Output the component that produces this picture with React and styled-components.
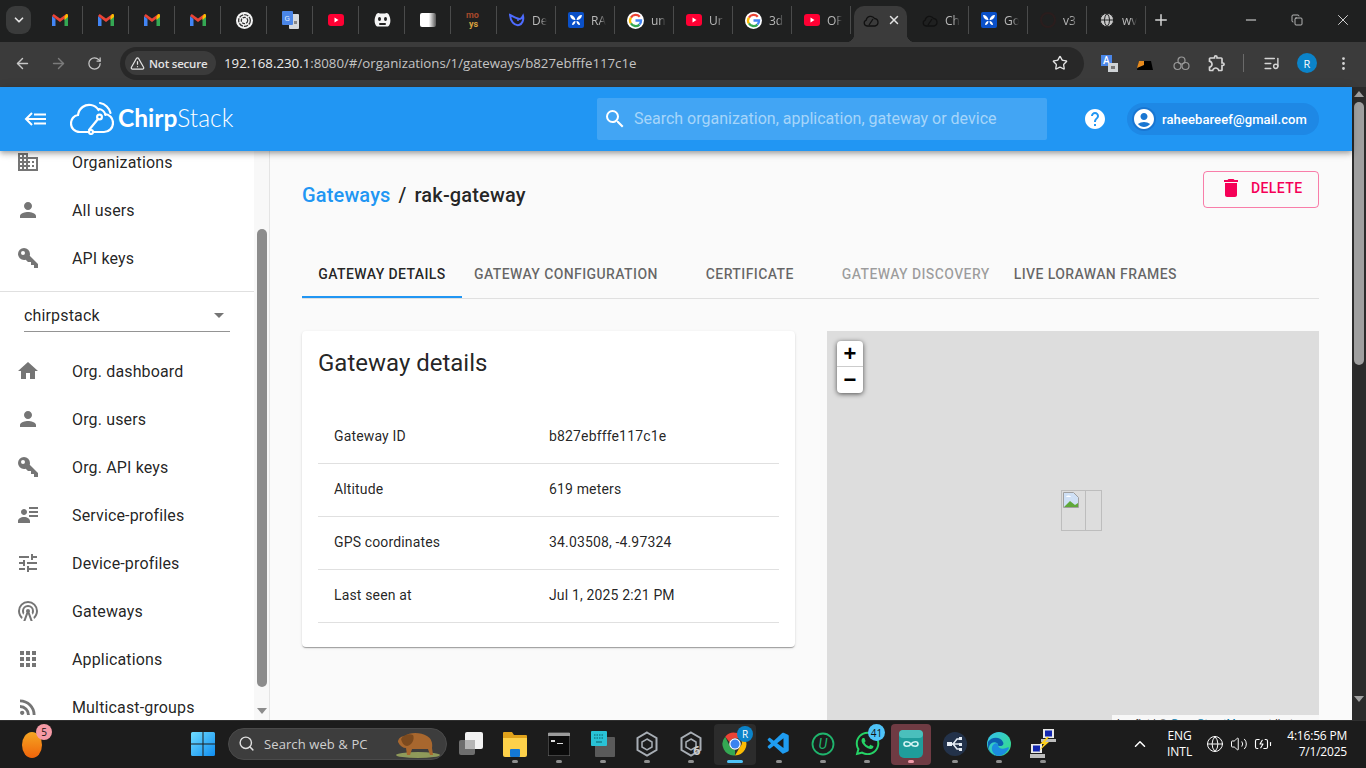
import * as React from 'react';
import styled, { createGlobalStyle } from 'styled-components';
import {
  ArrowLeft, ArrowRight, RotateCw, Star, X, Minus, Plus, Copy, ChevronDown, ChevronUp,
  EllipsisVertical, TriangleAlert, ListMusic, Search, Volume2, Globe, BatteryCharging,
} from 'lucide-react';
import { MdDelete, MdHelp, MdAccountCircle, MdSearch, MdHome, MdPerson, MdDomain, MdTune, MdApps, MdOutlineExtension } from 'react-icons/md';
import { FaWhatsapp } from 'react-icons/fa';
import { VscVscode } from 'react-icons/vsc';

const Global = createGlobalStyle`
  html, body { margin: 0; padding: 0; height: 100%; overflow: hidden; }
  body { font-family: Roboto, "Liberation Sans", sans-serif; background: #1c1c1c; }
  * { box-sizing: border-box; }
`;

const Screen = styled.div`
  width: 1366px;
  height: 768px;
  display: flex;
  flex-flow: column;
  overflow: hidden;
`;

/* ---- browser chrome ---- */

const TabStrip = styled.div`
  flex: 0 0 42px;
  display: flex;
  align-items: flex-start;
  background: #1f2020;
  padding: 6px 0 0 6px;
  font-family: "Open Sans", sans-serif;
`;

const TabMenu = styled.div`
  flex: 0 0 25px;
  height: 28px;
  margin-right: 6px;
  border-radius: 9px;
  background: #3a3b3b;
  color: #e3e3e3;
  display: flex;
  align-items: center;
  justify-content: center;
`;

const Tab = styled.div`
  flex: 0 0 ${p => p.$width}px;
  height: 28px;
  display: flex;
  align-items: center;
  padding-left: ${p => p.$wide ? 12 : 15}px;
  gap: 7px;
  border-right: 1px solid #4a4b4b;
`;

const ActiveTab = styled.div`
  flex: 0 0 53px;
  height: 36px;
  margin: 0 3px;
  border-radius: 10px 10px 0 0;
  background: #3b3b3b;
  display: flex;
  align-items: center;
  gap: 8px;
  padding: 0 0 8px 9px;
  color: #e3e3e3;
  position: relative;

  &::before, &::after {
    content: '';
    position: absolute;
    bottom: 0;
    width: 8px;
    height: 8px;
  }
  &::before {
    left: -8px;
    background: radial-gradient(circle at 0 0, transparent 8px, #3b3b3b 8.500px);
  }
  &::after {
    right: -8px;
    background: radial-gradient(circle at 100% 0, transparent 8px, #3b3b3b 8.500px);
  }
`;

const TabTitle = styled.span`
  width: 15px;
  overflow: hidden;
  font-size: 12px;
  color: #b9b9b9;
  white-space: nowrap;
  mask-image: linear-gradient(90deg, #000 55%, transparent);
`;

const NewTab = styled.div`
  flex: 0 0 30px;
  height: 28px;
  color: #d5d5d5;
  display: flex;
  align-items: center;
  justify-content: center;
`;

const WindowButtons = styled.div`
  margin-left: auto;
  display: flex;
  color: #e3e3e3;
  margin-top: -6px;
`;

const WindowButton = styled.div`
  width: 46px;
  height: 40px;
  display: flex;
  align-items: center;
  justify-content: center;
`;

const Toolbar = styled.div`
  flex: 0 0 45px;
  display: flex;
  align-items: center;
  background: #3b3b3b;
  padding: 0 0 3px 4px;
  color: #c7c7c7;
  font-family: "Open Sans", sans-serif;
`;

const NavButton = styled.div`
  flex: 0 0 36px;
  display: flex;
  justify-content: center;
  color: ${p => p.$off ? '#7b7b7b' : '#c7c7c7'};
`;

const Omnibox = styled.div`
  flex: 0 0 964px;
  height: 33px;
  margin: 0 7px 0 8px;
  border-radius: 17px;
  background: #282828;
  display: flex;
  align-items: center;
  padding: 0 16px 0 5px;
`;

const SecureChip = styled.div`
  height: 24px;
  width: 91px;
  border-radius: 12px;
  background: #3b3b3b;
  display: flex;
  align-items: center;
  gap: 4px;
  padding-left: 5px;
  color: #e3e3e3;
  font-size: 11.5px;
  font-weight: 600;
  white-space: nowrap;
  letter-spacing: -0.2px;
`;

const Url = styled.div`
  margin-left: 8px;
  font-size: 13.25px;
  color: #c4c4c4;
  flex: 1;
  white-space: nowrap;
  span { color: #ececec; }
`;

const ToolIcon = styled.div`
  flex: 0 0 36px;
  display: flex;
  justify-content: center;
  align-items: center;
`;

const ToolDivider = styled.div`
  width: 1px;
  height: 18px;
  background: #6a6a6a;
  margin: 0 9px 0 8px;
`;

const ProfileDot = styled.div`
  width: 20px;
  height: 20px;
  border-radius: 50%;
  background: #0b83c9;
  color: #fff;
  font-size: 11px;
  display: flex;
  align-items: center;
  justify-content: center;
`;

/* ---- chirpstack ---- */

const AppFrame = styled.div`
  flex: 1;
  min-height: 0;
  display: flex;
`;

const AppColumn = styled.div`
  flex: 1;
  min-width: 0;
  display: flex;
  flex-flow: column;
`;

const Header = styled.header`
  flex: 0 0 64px;
  background: #2196f3;
  display: flex;
  align-items: center;
  color: #fff;
  padding: 0 33px 0 24px;
  position: relative;
  z-index: 2;
  box-shadow: 0 2px 4px -1px rgba(0,0,0,.2), 0 4px 5px 0 rgba(0,0,0,.14), 0 1px 10px 0 rgba(0,0,0,.12);
`;

const Logo = styled.div`
  display: flex;
  align-items: center;
  margin-left: 24px;
  padding-bottom: 4px;
  flex: 0 0 527px;
  gap: 4px;
`;

const LogoText = styled.div`
  font-family: Lato, Roboto, sans-serif;
  font-size: 24.5px;
  font-weight: 300;
  b { font-weight: 700; }
`;

const SearchBox = styled.div`
  flex: 0 0 450px;
  height: 42px;
  background: rgba(255,255,255,.15);
  border-radius: 2px;
  display: flex;
  align-items: center;
  padding: 0 0 1px 6px;
  gap: 7px;
  font-size: 16px;
  color: #a6d5fa;
`;

const HelpButton = styled.div`
  margin-left: 36px;
  display: flex;
`;

const UserChip = styled.div`
  margin-left: auto;
  height: 32px;
  width: 192px;
  border-radius: 16px;
  background: #1e88e5;
  display: flex;
  align-items: center;
  padding-left: 5px;
  gap: 6px;
  font-size: 13px;
  font-weight: 500;
  letter-spacing: .1px;
  white-space: nowrap;
`;

const Avatar = styled.div`
  width: 24px;
  height: 24px;
  border-radius: 50%;
  background: #1976d2;
  display: flex;
  align-items: center;
  justify-content: center;
`;

const Body = styled.div`
  flex: 1;
  min-height: 0;
  display: flex;
`;

const Sidebar = styled.aside`
  flex: 0 0 270px;
  display: flex;
  background: #fff;
  border-right: 1px solid #e4e4e4;
  overflow: hidden;
`;

const SideContent = styled.nav`
  flex: 0 0 254px;
  margin-top: -13px;
`;

const NavItem = styled.div`
  height: 48px;
  display: flex;
  align-items: center;
  padding-left: 16px;
  gap: 32px;
  font-size: 16px;
  letter-spacing: .15px;
  color: rgba(0,0,0,.87);
  svg { color: #757575; flex: 0 0 24px; }
`;

const Divider = styled.div`
  height: 1px;
  background: #e0e0e0;
  margin: 9px 0 7px;
`;

const OrgSelect = styled.div`
  height: 33px;
  margin: 0 24px 15px;
  border-bottom: 1px solid #949494;
  display: flex;
  align-items: center;
  justify-content: space-between;
  font-size: 16px;
  letter-spacing: .15px;
  color: rgba(0,0,0,.87);
`;

const Caret = styled.div`
  width: 0;
  height: 0;
  margin-right: 6px;
  border: 5px solid transparent;
  border-top-color: #757575;
  border-bottom: 0;
`;

const SideScroll = styled.div`
  flex: 0 0 15px;
  background: #f8f8f8;
  display: flex;
  flex-flow: column;
  align-items: center;
  padding-top: 78px;
`;

const SideThumb = styled.div`
  width: 10px;
  height: 458px;
  border-radius: 5px;
  background: #8c8c8c;
`;

const SideArrow = styled.div`
  margin-top: 21px;
  width: 0;
  height: 0;
  border: 5px solid transparent;
  border-top: 6px solid #8c8c8c;
  border-bottom: 0;
`;

const Main = styled.main`
  flex: 1;
  min-width: 0;
  background: #fafafa;
  padding: 20px 33px 0 32px;
  overflow: hidden;
`;

const TitleRow = styled.div`
  display: flex;
  justify-content: space-between;
  align-items: flex-start;
  height: 79px;
`;

const Crumbs = styled.h1`
  margin: 14px 0 0;
  font-size: 20px;
  font-weight: 500;
  line-height: 20px;
  letter-spacing: .15px;
  color: rgba(0,0,0,.87);
  display: flex;
  gap: 8px;
`;

const CrumbLink = styled.span`
  color: #2196f3;
`;

const DeleteButton = styled.button`
  width: 116px;
  height: 37px;
  background: none;
  border: 1px solid rgba(245,0,87,.5);
  border-radius: 4px;
  color: #f50057;
  font: 500 14px Roboto, sans-serif;
  letter-spacing: .4px;
  display: flex;
  align-items: center;
  padding: 0 0 3px 15px;
  gap: 8px;
`;

const TabBar = styled.div`
  height: 49px;
  display: flex;
  border-bottom: 1px solid #e0e0e0;
`;

const PageTab = styled.div`
  min-width: 160px;
  height: 48px;
  padding: 2px 12px 0;
  display: flex;
  align-items: center;
  justify-content: center;
  font-size: 14px;
  font-weight: 500;
  letter-spacing: .4px;
  white-space: nowrap;
  color: ${p => p.$active ? 'rgba(0,0,0,.87)' : p.$disabled ? 'rgba(0,0,0,.38)' : 'rgba(0,0,0,.6)'};
  border-bottom: 2px solid ${p => p.$active ? '#2196f3' : 'transparent'};
`;

const Columns = styled.div`
  margin-top: 32px;
  display: grid;
  grid-template-columns: 493px 492px;
  gap: 32px;
  align-items: start;
`;

const Card = styled.section`
  height: 316px;
  padding: 16px;
  background: #fff;
  border-radius: 4px;
  box-shadow: 0 2px 1px -1px rgba(0,0,0,.2), 0 1px 1px 0 rgba(0,0,0,.14), 0 1px 3px 0 rgba(0,0,0,.12);
`;

const CardTitle = styled.h2`
  margin: 0 0 32px;
  font-size: 24px;
  line-height: 32px;
  font-weight: 400;
  color: rgba(0,0,0,.87);
`;

const DetailRow = styled.div`
  height: 53px;
  display: flex;
  align-items: center;
  padding: 0 0 2px 16px;
  border-bottom: 1px solid #e0e0e0;
  font-size: 14px;
  letter-spacing: .15px;
  color: rgba(0,0,0,.87);
`;

const DetailLabel = styled.div`
  flex: 0 0 215px;
`;

const MapPane = styled.div`
  height: 520px;
  background: #ddd;
  position: relative;
  padding: 10px;
`;

const ZoomControl = styled.div`
  width: 26px;
  border-radius: 4px;
  background: #fff;
  box-shadow: 0 1px 5px rgba(0,0,0,.65);
`;

const ZoomButton = styled.div`
  height: 26px;
  display: flex;
  align-items: center;
  justify-content: center;
  color: #000;
  font: 700 22px "Liberation Sans", sans-serif;
  border-bottom: ${p => p.$top ? '1px solid #ccc' : 0};
`;

const BrokenTile = styled.div`
  position: absolute;
  top: 159px;
  left: ${p => p.$left}px;
  width: ${p => p.$width}px;
  height: 41px;
  border: 1px solid #bdbdbd;
  padding: 1px;
`;

const Attribution = styled.div`
  position: absolute;
  top: 384px;
  right: 0;
  width: 207px;
  height: 20px;
  padding: 2px 5px 0;
  background: rgba(255,255,255,.75);
  color: #333;
  font: 11px "Liberation Sans", sans-serif;
  white-space: nowrap;
  overflow: hidden;
  b { color: #0078a8; font-weight: 400; }
`;

const PageScroll = styled.div`
  flex: 0 0 14px;
  background: #2b2b2b;
  display: flex;
  flex-flow: column;
  align-items: center;
  padding-top: 4px;
`;

const ScrollUp = styled.div`
  width: 0;
  height: 0;
  border: 5px solid transparent;
  border-bottom: 6px solid #9f9f9f;
  border-top: 0;
`;

const ScrollThumb = styled.div`
  width: 10px;
  height: 263px;
  margin-top: 5px;
  border-radius: 5px;
  background: #9f9f9f;
`;

const ScrollDown = styled.div`
  width: 0;
  height: 0;
  margin-top: 331px;
  border: 5px solid transparent;
  border-top: 6px solid #9f9f9f;
  border-bottom: 0;
`;

/* ---- taskbar ---- */

const Taskbar = styled.footer`
  flex: 0 0 48px;
  background: #1c1c1c;
  border-top: 1px solid #2f2f2f;
  display: flex;
  align-items: center;
  color: #fff;
  font-family: "Open Sans", sans-serif;
`;

const Weather = styled.div`
  flex: 0 0 181px;
  padding-left: 22px;
`;

const WeatherDot = styled.div`
  width: 20px;
  height: 26px;
  border-radius: 50%;
  background: linear-gradient(#f5a623, #f0640a);
  position: relative;
`;

const Badge = styled.div`
  position: absolute;
  top: ${p => p.$top}px;
  right: ${p => p.$right}px;
  width: ${p => p.$size}px;
  height: ${p => p.$size}px;
  border-radius: 50%;
  background: ${p => p.$bg};
  color: ${p => p.$color || '#111'};
  font-size: 10px;
  display: flex;
  align-items: center;
  justify-content: center;
`;

const TaskSlot = styled.div`
  flex: 0 0 44px;
  height: 41px;
  position: relative;
  display: flex;
  align-items: center;
  justify-content: center;
  padding-bottom: 2px;
`;

const TaskTile = styled.div`
  position: absolute;
  top: 0;
  bottom: 0;
  left: ${p => p.$inset}px;
  right: ${p => p.$inset}px;
  border-radius: 4px;
  background: ${p => p.$bg};
`;

const TaskIcon = styled.div`
  position: relative;
  display: flex;
`;

const TaskDot = styled.div`
  position: absolute;
  bottom: 2px;
  left: 50%;
  margin-left: ${p => p.$long ? -8 : -3}px;
  width: ${p => p.$long ? 16 : 6}px;
  height: 3px;
  border-radius: 2px;
  background: ${p => p.$color || '#8f8f8f'};
`;

const SearchPill = styled.div`
  flex: 0 0 219px;
  height: 32px;
  margin: 0 2px 1px 3px;
  border-radius: 16px;
  background: #3d3d3d;
  border: 1px solid #4a4a4a;
  display: flex;
  align-items: center;
  padding: 0 0 1px 9px;
  gap: 9px;
  font-size: 13px;
  letter-spacing: .1px;
  color: #d0d0d0;
  white-space: nowrap;
`;

const Bison = styled.svg`
  margin-left: auto;
  margin-right: 6px;
`;

const Tray = styled.div`
  margin-left: auto;
  display: flex;
  align-items: center;
  padding: 0 19px 2px 0;
  font-size: 12px;
`;

const TrayStack = styled.div`
  line-height: 16px;
  text-align: ${p => p.$align};
  margin: ${p => p.$margin};
  letter-spacing: ${p => p.$tight ? '-.2px' : 0};
  white-space: nowrap;
`;

const TrayIcons = styled.div`
  display: flex;
  gap: 6px;
`;

/* favicons, all just small drawings */

const Gmail = () => (
  <svg width="16" height="16" viewBox="0 0 16 16">
    <path d="M0 4v10h3.5V7z" fill="#4285f4" />
    <path d="M16 4v10h-3.5V7z" fill="#34a853" />
    <path d="M0 4l8 6 8-6-1.7-2L8 6.5 1.7 2z" fill="#ea4335" />
    <path d="M12.5 4.600V8L16 5V3.200c0-1-1.200-1.600-2-1z" fill="#fbbc04" />
  </svg>
);

const YouTube = () => (
  <svg width="16" height="16" viewBox="0 0 16 16">
    <rect x="0" y="2" width="16" height="12" rx="3" fill="#ff0033" />
    <path d="M6.500 5.500v5l4-2.500z" fill="#fff" />
  </svg>
);

const Google = () => (
  <svg width="17" height="17" viewBox="0 0 16 16">
    <circle cx="8" cy="8" r="8" fill="#fff" />
    <path d="M12 4.500A5.200 5.200 0 0 0 3.700 5.200" stroke="#ea4335" strokeWidth="2.200" fill="none" />
    <path d="M3.700 5.200a5.200 5.200 0 0 0 0 5.600" stroke="#fbbc04" strokeWidth="2.200" fill="none" />
    <path d="M3.700 10.800a5.200 5.200 0 0 0 8 1" stroke="#34a853" strokeWidth="2.200" fill="none" />
    <path d="M11.700 11.800A5 5 0 0 0 13.200 8H8" stroke="#4285f4" strokeWidth="2.200" fill="none" />
  </svg>
);

const Rings = () => (
  <svg width="17" height="17" viewBox="0 0 16 16" fill="none">
    <circle cx="8" cy="8" r="8" fill="#f4f4f4" />
    <circle cx="8" cy="8" r="5.500" stroke="#333" strokeWidth="1.200" strokeDasharray="4 1" />
    <circle cx="8" cy="8" r="3" stroke="#333" strokeWidth="1.200" strokeDasharray="3 1" />
  </svg>
);

const Translate = () => (
  <svg width="17" height="18" viewBox="0 0 17 18">
    <rect x="7" y="3" width="10" height="15" rx="1" fill="#d5d9dd" />
    <rect x="0" y="0" width="11" height="14" rx="1" fill="#4a86e8" />
    <text x="2.500" y="10" fontSize="8" fontFamily="Roboto" fill="#dce8fb">G</text>
    <rect x="12" y="10" width="3" height="3" fill="#888" />
  </svg>
);

const TranslateExt = () => (
  <svg width="17" height="17" viewBox="0 0 17 17">
    <rect x="0" y="0" width="11" height="11" fill="#4a86e8" />
    <text x="2" y="9" fontSize="10" fontWeight="500" fontFamily="Roboto" fill="#fff">A</text>
    <rect x="7" y="8" width="10" height="9" fill="#cfd3d6" />
    <rect x="10" y="11" width="4" height="3" fill="#777" />
  </svg>
);

const Bot = () => (
  <svg width="17" height="16" viewBox="0 0 17 16">
    <path d="M2 3a2.500 2.500 0 0 1 4-1.500h5A2.500 2.500 0 0 1 15 3c2 4 2 9-1 11.500H3C0 12 0 7 2 3z" fill="#f5f5f5" />
    <ellipse cx="5.500" cy="7" rx="1.500" ry="2" fill="#222" />
    <ellipse cx="11.500" cy="7" rx="1.500" ry="2" fill="#222" />
    <rect x="5" y="11" width="7" height="2" rx="1" fill="#222" />
  </svg>
);

const Blank = () => (
  <svg width="16" height="14" viewBox="0 0 16 14">
    <defs>
      <linearGradient id="fadeBlank"><stop offset=".55" stopColor="#fff" /><stop offset="1" stopColor="#555" /></linearGradient>
    </defs>
    <rect width="16" height="14" rx="2" fill="url(#fadeBlank)" />
  </svg>
);

const MoYs = () => (
  <svg width="16" height="18" viewBox="0 0 16 18">
    <text x="0" y="7" fontSize="9" fontWeight="700" fontFamily="Roboto" fill="#a5482b">mo</text>
    <text x="3" y="16" fontSize="9" fontWeight="700" fontFamily="Roboto" fill="#d9a03f">ys</text>
  </svg>
);

const Whale = () => (
  <svg width="16" height="16" viewBox="0 0 16 16" fill="none">
    <path d="M1 3c.5 6 4 11 9 10 3-.6 5-5 4-9-1 2-2 3-3 3-3 0-6-2-10-4z" stroke="#4d6bfe" strokeWidth="2" />
    <circle cx="9" cy="8" r="1" fill="#4d6bfe" />
  </svg>
);

const Rak = () => (
  <svg width="16" height="16" viewBox="0 0 16 16">
    <rect width="16" height="16" rx="2" fill="#0a50c8" />
    <path d="M2 3c3 0 5 2 5.500 5C5 8 2.500 7 2 3zM14 3c-3 0-5 2-5.500 5C11 8 13.500 7 14 3zM4 13c0-2 1.500-4 3.500-4 0 2-1 4-3.500 4zM12 13c0-2-1.500-4-3.500-4 0 2 1 4 3.500 4z" fill="#fff" />
  </svg>
);

const CloudTab = () => (
  <svg width="16" height="14" viewBox="0 0 16 14" fill="none" stroke="#111" strokeWidth="1.300">
    <path d="M4 13a3 3 0 0 1-.8-5.800A4.500 4.500 0 0 1 11.500 5.500 3.800 3.800 0 0 1 12 13z" />
    <path d="M6 12l4-6" />
  </svg>
);

const DarkDot = () => (
  <svg width="16" height="16" viewBox="0 0 16 16"><circle cx="8" cy="8" r="7" fill="none" stroke="#2a1d1d" strokeWidth="2" /></svg>
);

const TabGlobe = () => <Globe size={16} color="#1f2020" fill="#c7c7c7" strokeWidth={1.500} />;

const TABS = [
  [<Gmail />], [<Gmail />], [<Gmail />], [<Gmail />], [<Rings />], [<Translate />], [<YouTube />], [<Bot />], [<Blank />], [<MoYs />],
  [<Whale />, 'De'], [<Rak />, 'RA'], [<Google />, 'un'], [<YouTube />, 'Ur'], [<Google />, '3d'], [<YouTube />, 'OF'],
];

const TABS_AFTER = [
  [<CloudTab />, 'Ch'], [<Rak />, 'Go'], [<DarkDot />, 'v3'], [<TabGlobe />, 'wv'],
];

const ChirpLogo = () => (
  <svg width="44" height="36" viewBox="0 0 44 36" fill="none" stroke="#fff" strokeWidth="2.200" strokeLinecap="round">
    <path d="M19 33H10C4 33 1 28.500 1 24.500 1 20 4 16.500 8 16 9 9 15 5 21 6c3 .5 6 2.500 7.500 5" />
    <path d="M24 33h10c5 0 9-4 9-9 0-5-3.500-8.500-8-9" />
    <path d="M19 31l9-11" />
    <circle cx="21" cy="33" r="2" />
    <circle cx="29.500" cy="18" r="2.400" />
    <path d="M29 10c3 .5 6 3 6.500 6" />
    <path d="M30 4c5 .8 9.500 5 10.500 10" />
  </svg>
);

const MdiIcon = ({ d, size = 24 }) => (
  <svg width={size} height={size} viewBox="0 0 24 24" fill="currentColor"><path d={d} /></svg>
);

const KEY = 'M22,18V22H18V19H15V16H12L9.740,13.740C9.190,13.910 8.610,14 8,14A6,6 0 0,1 2,8A6,6 0 0,1 8,2A6,6 0 0,1 14,8C14,8.610 13.910,9.190 13.740,9.740L22,18M7,5A2,2 0 0,0 5,7A2,2 0 0,0 7,9A2,2 0 0,0 9,7A2,2 0 0,0 7,5Z';
const DETAILS = 'M11,9C11,10.660 9.660,12 8,12C6.340,12 5,10.660 5,9C5,7.340 6.340,6 8,6C9.660,6 11,7.340 11,9M14,20H2V18C2,15.790 4.690,14 8,14C11.310,14 14,15.790 14,18M22,12V14H13V12M22,8V10H13V8M22,4V6H13V4Z';
const TOWER = 'M12,10A2,2 0 0,1 14,12C14,12.500 13.820,12.940 13.530,13.290L16.700,22H14.570L12,14.930L9.430,22H7.300L10.470,13.290C10.180,12.940 10,12.500 10,12A2,2 0 0,1 12,10M12,8A4,4 0 0,0 8,12C8,12.500 8.100,13 8.280,13.460L7.400,15.860C6.530,14.810 6,13.470 6,12A6,6 0 0,1 12,6A6,6 0 0,1 18,12C18,13.470 17.470,14.810 16.600,15.860L15.720,13.460C15.900,13 16,12.500 16,12A4,4 0 0,0 12,8M12,4A8,8 0 0,0 4,12C4,14.360 5,16.500 6.640,17.940L5.920,19.940C3.540,18.110 2,15.230 2,12A10,10 0 0,1 12,2A10,10 0 0,1 22,12C22,15.230 20.460,18.110 18.080,19.940L17.360,17.940C19,16.500 20,14.360 20,12A8,8 0 0,0 12,4Z';
const RSS = 'M6.180,15.640A2.180,2.180 0 0,1 8.360,17.820C8.360,19 7.380,20 6.180,20C5,20 4,19 4,17.820A2.180,2.180 0 0,1 6.180,15.640M4,4.440A15.560,15.560 0 0,1 19.560,20H16.730A12.730,12.730 0 0,0 4,7.270V4.440M4,10.100A9.900,9.900 0 0,1 13.900,20H11.070A7.070,7.070 0 0,0 4,12.930V10.100Z';

const TOP_NAV = [
  [<MdDomain size={24} />, 'Organizations'],
  [<MdPerson size={24} />, 'All users'],
  [<MdiIcon d={KEY} />, 'API keys'],
];

const ORG_NAV = [
  [<MdHome size={24} />, 'Org. dashboard'],
  [<MdPerson size={24} />, 'Org. users'],
  [<MdiIcon d={KEY} />, 'Org. API keys'],
  [<MdiIcon d={DETAILS} />, 'Service-profiles'],
  [<MdTune size={24} />, 'Device-profiles'],
  [<MdiIcon d={TOWER} />, 'Gateways'],
  [<MdApps size={24} />, 'Applications'],
  [<MdiIcon d={RSS} />, 'Multicast-groups'],
];

const DETAILS_ROWS = [
  ['Gateway ID', 'b827ebfffe117c1e'],
  ['Altitude', '619 meters'],
  ['GPS coordinates', '34.03508, -4.97324'],
  ['Last seen at', 'Jul 1, 2025 2:21 PM'],
];

/* taskbar drawings */

const WinLogo = () => (
  <svg width="24" height="24" viewBox="0 0 24 24">
    <defs>
      <linearGradient id="winBlue" x1="0" y1="0" x2="1" y2="1"><stop stopColor="#6fdcff" /><stop offset="1" stopColor="#0f8df0" /></linearGradient>
    </defs>
    <path d="M0 1.500A1.500 1.500 0 0 1 1.500 0h10v11.500H0zM12.500 0h10A1.500 1.500 0 0 1 24 1.500v10H12.500zM0 12.500h11.500V24h-10A1.500 1.500 0 0 1 0 22.500zM12.500 12.500H24v10a1.500 1.500 0 0 1-1.500 1.500h-10z" fill="url(#winBlue)" />
  </svg>
);

const TaskView = () => (
  <svg width="24" height="24" viewBox="0 0 24 24">
    <rect x="0" y="8" width="16" height="15" rx="2" fill="#6e6e6e" />
    <rect x="6" y="0" width="18" height="17" rx="2" fill="#f2f2f2" />
    <rect x="6" y="8" width="10" height="9" fill="#b5b5b5" />
  </svg>
);

const Explorer = () => (
  <svg width="24" height="26" viewBox="0 0 24 26">
    <path d="M0 2a1 1 0 0 1 1-1h8l2 3h12a1 1 0 0 1 1 1v4H0z" fill="#e0a21b" />
    <path d="M0 7h24v17a2 2 0 0 1-2 2H2a2 2 0 0 1-2-2z" fill="#fdd14a" />
    <rect x="7" y="18" width="10" height="8" rx="1" fill="#1478d4" />
  </svg>
);

const Terminal = () => (
  <svg width="22" height="24" viewBox="0 0 22 24">
    <rect x="0" y="1" width="22" height="23" rx="1" fill="#0b0b0b" stroke="#777" />
    <rect x="0" y="1" width="22" height="3" fill="#9a9a9a" />
    <path d="M3 8h4v2H3zM9 11h6v1H9z" fill="#ddd" />
  </svg>
);

const Keyboard = () => (
  <svg width="24" height="26" viewBox="0 0 24 26">
    <rect x="4" y="6" width="20" height="20" rx="1" fill="#5a5a5a" />
    <rect x="0" y="0" width="16" height="15" rx="1" fill="#29c2d6" />
    <path d="M3 4h10M3 7h10" stroke="#0b5c66" strokeDasharray="1.500 1" />
    <path d="M5 11h6" stroke="#0b5c66" />
  </svg>
);

const Cube = ({ label }) => (
  <svg width="24" height="26" viewBox="0 0 24 26" fill="none" stroke="#a8aeb5" strokeWidth="2">
    <path d="M12 1.500l9.500 5.500v12L12 24.500 2.500 19V7z" />
    <path d="M12 8l5 3v5l-5 3-5-3v-5z" strokeWidth="1.500" />
    {label && <text x="14" y="24" fontSize="13" fontWeight="700" fill="#ccc" stroke="none" fontFamily="Roboto">6</text>}
  </svg>
);

const ChromeIcon = () => (
  <svg width="26" height="26" viewBox="0 0 24 24">
    <path d="M12 1.500a10.500 10.500 0 0 1 9.100 5.250H12A5.300 5.300 0 0 0 7 10.300L3 5.200A10.500 10.500 0 0 1 12 1.500z" fill="#ea4335" />
    <path d="M21.100 6.750A10.500 10.500 0 0 1 12 22.500l4.500-7.800a5.300 5.300 0 0 0 .2-7.950z" fill="#fbbc04" />
    <path d="M12 22.500A10.500 10.500 0 0 1 3 5.200l4.500 9.500A5.300 5.300 0 0 0 12 17.300z" fill="#34a853" />
    <circle cx="12" cy="12" r="5.300" fill="#fff" />
    <circle cx="12" cy="12" r="4.200" fill="#3b82f0" />
  </svg>
);

const UIcon = () => (
  <svg width="24" height="24" viewBox="0 0 24 24" fill="none" stroke="#1fb56d" strokeWidth="1.800">
    <circle cx="12" cy="12" r="10.500" />
    <text x="7.500" y="17" fontSize="14" fontStyle="italic" fontFamily="Roboto" fill="#1fb56d" stroke="none">U</text>
  </svg>
);

const ArduinoIcon = () => (
  <svg width="24" height="28" viewBox="0 0 24 28" fill="none">
    <rect width="24" height="28" rx="5" fill="#1f9d9b" />
    <rect width="24" height="8" rx="4" fill="#4abfbc" />
    <path d="M12 14c-2-3-7-3-7 0s5 3 7 0 7-3 7 0-5 3-7 0z" stroke="#d6f5f4" strokeWidth="1.600" />
  </svg>
);

const HubIcon = () => (
  <svg width="24" height="24" viewBox="0 0 24 24" fill="none" stroke="#e6edf5" strokeWidth="1.500">
    <circle cx="12" cy="12" r="12" fill="#23324a" stroke="none" />
    <path d="M5 12h5M10 12l4-5h4M10 12h8M10 12l4 5h4" />
    <rect x="4" y="10" width="5" height="4" fill="#e6edf5" stroke="none" />
    <rect x="16" y="5" width="3" height="3" fill="#e6edf5" stroke="none" />
    <rect x="16" y="11" width="3" height="3" fill="#e6edf5" stroke="none" />
    <rect x="16" y="16" width="3" height="3" fill="#e6edf5" stroke="none" />
  </svg>
);

const EdgeIcon = () => (
  <svg width="24" height="24" viewBox="0 0 24 24">
    <defs>
      <linearGradient id="edgeTop" x1="0" y1="0" x2="1" y2="1"><stop stopColor="#35c1f1" /><stop offset="1" stopColor="#35e07c" /></linearGradient>
    </defs>
    <circle cx="12" cy="12" r="12" fill="url(#edgeTop)" />
    <path d="M1 10c3-5 12-6 15 0 1 2 0 4-3 4-1 0-2 0-2-1 0-4-8-4-9 2-.5 4 3 8 8 9C4 24 0 17 1 10z" fill="#0c5fb0" />
    <path d="M11 13c0 3 4 5 8 3 2-1 3-1 3 0-2 5-7 8-11 8-4-1-7-5-6-9 1-4 6-5 6-2z" fill="#1b8ce0" />
  </svg>
);

const NetworkPc = () => (
  <svg width="26" height="30" viewBox="0 0 26 30">
    <rect x="13" y="0" width="11" height="9" fill="#e8e8e8" />
    <rect x="15" y="1.500" width="7" height="6" fill="#1226b0" />
    <rect x="11" y="10" width="15" height="3" fill="#bdbdbd" />
    <rect x="1" y="15" width="11" height="9" fill="#e8e8e8" />
    <rect x="3" y="16.500" width="7" height="6" fill="#1226b0" />
    <rect x="0" y="25" width="15" height="4" fill="#bdbdbd" />
    <path d="M17 8l-7 7h4l-5 7 10-9h-4l4-5z" fill="#ffd21f" />
  </svg>
);

const TASK_ICONS = [
  { icon: <TaskView /> },
  { icon: <Explorer />, dot: true },
  { icon: <Terminal />, dot: true },
  { icon: <Keyboard />, dot: true },
  { icon: <Cube />, dot: true },
  { icon: <Cube label />, dot: true },
  { icon: <ChromeIcon />, long: true, tile: '#2c2c2c', inset: 1, badge: { text: 'R', bg: '#0b83c9', color: '#fff', size: 16, top: 2, right: 4 } },
  { icon: <VscVscode size={26} color="#1f9cf0" />, dot: true },
  { icon: <UIcon />, dot: true },
  { icon: <FaWhatsapp size={27} color="#25d366" />, dot: true, badge: { text: '41', bg: '#4fc3f7', size: 17, top: 0, right: 4 } },
  { icon: <ArduinoIcon />, dot: true, dotColor: '#f09aa8', tile: '#6f3b43', inset: 2 },
  { icon: <HubIcon />, dot: true },
  { icon: <EdgeIcon />, dot: true },
  { icon: <NetworkPc />, dot: true },
];

export default function App() {
  return <Screen>
    <Global />
    <TabStrip>
      <TabMenu><ChevronDown size={14} strokeWidth={3} /></TabMenu>
      {TABS.map(([icon, title], i) => (
        <Tab key={i} $width={title ? 59 : 46} $wide={!!title}>
          {icon}
          {title && <TabTitle>{title}</TabTitle>}
        </Tab>
      ))}
      <ActiveTab><CloudTab /><X size={14} strokeWidth={2.500} /></ActiveTab>
      {TABS_AFTER.map(([icon, title], i) => (
        <Tab key={i} $width={59} $wide>
          {icon}
          <TabTitle>{title}</TabTitle>
        </Tab>
      ))}
      <NewTab><Plus size={18} /></NewTab>
      <WindowButtons>
        <WindowButton><Minus size={16} strokeWidth={1.500} /></WindowButton>
        <WindowButton><Copy size={12} strokeWidth={1.500} /></WindowButton>
        <WindowButton><X size={18} strokeWidth={1.200} /></WindowButton>
      </WindowButtons>
    </TabStrip>

    <Toolbar>
      <NavButton><ArrowLeft size={17} /></NavButton>
      <NavButton $off><ArrowRight size={17} /></NavButton>
      <NavButton><RotateCw size={15} /></NavButton>
      <Omnibox>
        <SecureChip><TriangleAlert size={15} />Not secure</SecureChip>
        <Url><span>192.168.230.1</span>:8080/#/organizations/1/gateways/b827ebfffe117c1e</Url>
        <Star size={16} color="#e3e3e3" />
      </Omnibox>
      <ToolIcon><TranslateExt /></ToolIcon>
      <ToolIcon>
        <svg width="18" height="16" viewBox="0 0 18 16"><path d="M1 15l2-9h12l2 9z" fill="#000" /><path d="M1 13l2-7h5v4z" fill="#e68a1d" /></svg>
      </ToolIcon>
      <ToolIcon>
        <svg width="17" height="15" viewBox="0 0 17 15" fill="none" stroke="#999" strokeWidth="1.200"><circle cx="8.500" cy="4.500" r="3.500" /><circle cx="4.500" cy="10" r="3.500" /><circle cx="12.500" cy="10" r="3.500" /></svg>
      </ToolIcon>
      <ToolIcon><MdOutlineExtension size={20} color="#d5d5d5" /></ToolIcon>
      <ToolDivider />
      <ToolIcon><ListMusic size={17} color="#d5d5d5" /></ToolIcon>
      <ToolIcon><ProfileDot>R</ProfileDot></ToolIcon>
      <ToolIcon><EllipsisVertical size={17} color="#d5d5d5" /></ToolIcon>
    </Toolbar>

    <AppFrame>
      <AppColumn>
        <Header>
          <svg width="22" height="16" viewBox="0 0 22 16" fill="none" stroke="#fff" strokeWidth="2">
            <path d="M8 2L2 8l6 6M2 8h20M10 3.500h12M10 12.500h12" />
          </svg>
          <Logo>
            <ChirpLogo />
            <LogoText><b>Chirp</b>Stack</LogoText>
          </Logo>
          <SearchBox><MdSearch size={24} color="#fff" />Search organization, application, gateway or device</SearchBox>
          <HelpButton><MdHelp size={24} /></HelpButton>
          <UserChip>
            <Avatar><MdAccountCircle size={24} color="#fff" /></Avatar>
            raheebareef@gmail.com
          </UserChip>
        </Header>
        <Body>
          <Sidebar>
            <SideContent>
              {TOP_NAV.map(([icon, label]) => <NavItem key={label}>{icon}{label}</NavItem>)}
              <Divider />
              <OrgSelect>chirpstack<Caret /></OrgSelect>
              {ORG_NAV.map(([icon, label]) => <NavItem key={label}>{icon}{label}</NavItem>)}
            </SideContent>
            <SideScroll>
              <SideThumb />
              <SideArrow />
            </SideScroll>
          </Sidebar>
          <Main>
            <TitleRow>
              <Crumbs><CrumbLink>Gateways</CrumbLink><span>/</span><span>rak-gateway</span></Crumbs>
              <DeleteButton><MdDelete size={24} />DELETE</DeleteButton>
            </TitleRow>
            <TabBar>
              <PageTab $active>GATEWAY DETAILS</PageTab>
              <PageTab>GATEWAY CONFIGURATION</PageTab>
              <PageTab>CERTIFICATE</PageTab>
              <PageTab $disabled>GATEWAY DISCOVERY</PageTab>
              <PageTab>LIVE LORAWAN FRAMES</PageTab>
            </TabBar>
            <Columns>
              <Card>
                <CardTitle>Gateway details</CardTitle>
                {DETAILS_ROWS.map(([label, value]) => (
                  <DetailRow key={label}>
                    <DetailLabel>{label}</DetailLabel>
                    {value}
                  </DetailRow>
                ))}
              </Card>
              <MapPane>
                <ZoomControl>
                  <ZoomButton $top>+</ZoomButton>
                  <ZoomButton>−</ZoomButton>
                </ZoomControl>
                <BrokenTile $left={234} $width={25}>
                  <svg width="16" height="16" viewBox="0 0 16 16">
                    <path d="M.5.500h10l5 5v10H.5z" fill="#cfe0f5" stroke="#a0a0a0" />
                    <path d="M1 15l6-6 5 4 3-2v4z" fill="#5fa83a" />
                    <path d="M3 5c1-2 4-2 5 0z" fill="#fff" />
                  </svg>
                </BrokenTile>
                <BrokenTile $left={258} $width={17} />
                <Attribution>Leaflet | © <b>OpenStreetMap</b> contributors</Attribution>
              </MapPane>
            </Columns>
          </Main>
        </Body>
      </AppColumn>
      <PageScroll>
        <ScrollUp />
        <ScrollThumb />
        <ScrollDown />
      </PageScroll>
    </AppFrame>

    <Taskbar>
      <Weather>
        <WeatherDot><Badge $top={-8} $right={-10} $size={16} $bg="#f59aa6">5</Badge></WeatherDot>
      </Weather>
      <TaskSlot><WinLogo /></TaskSlot>
      <SearchPill>
        <Search size={17} color="#e0e0e0" />
        Search web &amp; PC
        <Bison width="46" height="28" viewBox="0 0 46 28">
          <ellipse cx="24" cy="25" rx="22" ry="3" fill="#8f9a5a" />
          <path d="M4 12c0-4 4-6 7-6 4-4 16-4 22 0 4 2 6 7 5 12l1 7h-3l-2-6H18l-2 6h-3l-1-7c-3 0-6-2-8-6z" fill="#a8672e" />
          <path d="M7 9c2-4 8-6 12-4 2 4-1 10-6 11-3 0-5-3-6-7z" fill="#7c4a1e" />
        </Bison>
      </SearchPill>
      {TASK_ICONS.map((item, i) => (
        <TaskSlot key={i}>
          {item.tile && <TaskTile $bg={item.tile} $inset={item.inset} />}
          <TaskIcon>{item.icon}</TaskIcon>
          {item.badge && <Badge $top={item.badge.top} $right={item.badge.right} $size={item.badge.size} $bg={item.badge.bg} $color={item.badge.color}>{item.badge.text}</Badge>}
          {(item.dot || item.long) && <TaskDot $long={item.long} $color={item.long ? '#4fc3f7' : item.dotColor} />}
        </TaskSlot>
      ))}
      <Tray>
        <ChevronUp size={18} strokeWidth={2} />
        <TrayStack $align="center" $margin="0 14px 0 18px">ENG<br />INTL</TrayStack>
        <TrayIcons>
          <Globe size={18} strokeWidth={1.300} />
          <Volume2 size={18} strokeWidth={1.300} />
          <BatteryCharging size={18} strokeWidth={1.500} />
        </TrayIcons>
        <TrayStack $align="right" $margin="0 0 0 15px" $tight>4:16:56 PM<br />7/1/2025</TrayStack>
      </Tray>
    </Taskbar>
  </Screen>;
}
